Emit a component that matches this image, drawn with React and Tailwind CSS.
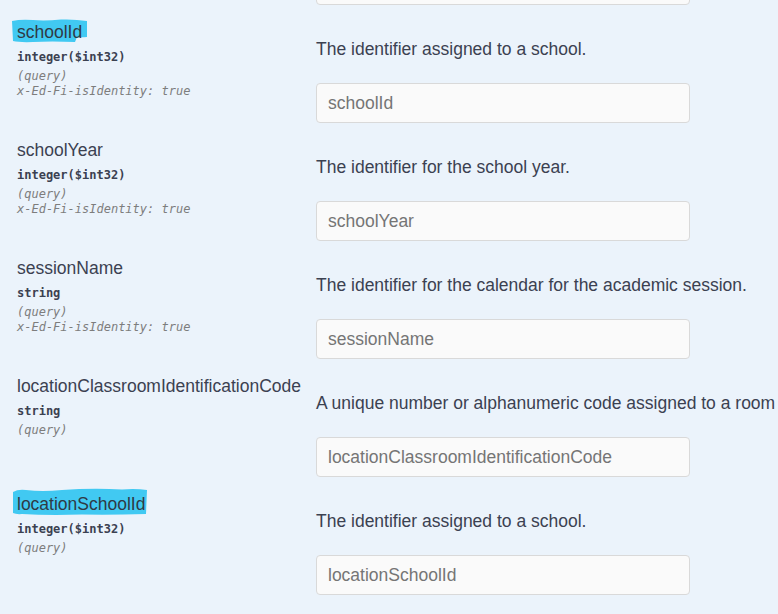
const PARAMS = [
  {
    name: "schoolId",
    type: "integer($int32)",
    identity: true,
    description: "The identifier assigned to a school.",
    highlight: "first",
  },
  {
    name: "schoolYear",
    type: "integer($int32)",
    identity: true,
    description: "The identifier for the school year.",
  },
  {
    name: "sessionName",
    type: "string",
    identity: true,
    description: "The identifier for the calendar for the academic session.",
  },
  {
    name: "locationClassroomIdentificationCode",
    type: "string",
    identity: false,
    description: "A unique number or alphanumeric code assigned to a room by a school, school system, state, or other agency or entity.",
  },
  {
    name: "locationSchoolId",
    type: "integer($int32)",
    identity: false,
    description: "The identifier assigned to a school.",
    highlight: "last",
  },
]

export default function App() {
  return (
    <div className="h-[614px] w-[778px] overflow-hidden bg-[#ebf3fb] font-['Liberation_Sans',Arial,sans-serif] text-[#3b4151]">
      {/* tail of the previous parameter row */}
      <div className="h-[19px] overflow-hidden pl-[316px]">
        <div className="mt-[-35px] h-[40px] w-[374px] rounded-[4px] border border-[#d9d9d9] bg-[#fafafa]" />
      </div>

      {PARAMS.map((p) => (
        <ParamRow key={p.name} param={p} />
      ))}
    </div>
  )
}

// marker-pen highlight drawn over the screenshot
function Marker({ variant }) {
  if (variant === "first") {
    return (
      <svg
        className="absolute -top-[3px] -left-[6px] h-[25px] w-[78px]"
        viewBox="0 0 78 25"
        preserveAspectRatio="none"
      >
        <path
          d="M1 3 Q10 1 22 2 T50 1.5 Q64 1 76 3 L76 19 Q70 19.5 66 19 L64 24 Q40 23 22 24 Q8 24.5 2 23 Z"
          fill="#41c9f2"
        />
      </svg>
    )
  }
  return (
    <svg
      className="absolute -top-[6px] -left-[5px] h-[29px] w-[136px]"
      viewBox="0 0 136 29"
      preserveAspectRatio="none"
    >
      <path
        d="M1 5 Q6 2 14 3 Q30 5 50 3 Q80 1 110 2.5 Q124 1.5 135 3 L134 27 Q100 28 70 27.5 Q36 28.5 10 27 Q4 27.5 1 26 Z"
        fill="#41c9f2"
      />
    </svg>
  )
}

function ParamRow({ param }) {
  return (
    <div className="flex h-[118px]">
      {/* ── Name column ── */}
      <div className="w-[316px] shrink-0 pl-[17px] pt-[2px]">
        <div className="h-[22px] whitespace-nowrap text-[17.5px] leading-[22px]">
          {param.highlight ? (
            <span className="relative inline-block">
              <Marker variant={param.highlight} />
              <span className="relative text-[#2f3a45]">{param.name}</span>
            </span>
          ) : (
            param.name
          )}
        </div>
        <div className="mt-[6px] font-['DejaVu_Sans_Mono',monospace] text-[12px] font-bold leading-[16px] text-[#3b4151]">
          {param.type}
        </div>
        <div className="mt-[4px] font-['DejaVu_Sans_Mono',monospace] text-[12px] italic leading-[15px] text-[#7d7d7d]">
          (query)
        </div>
        {param.identity ? (
          <div className="font-['DejaVu_Sans_Mono',monospace] text-[12px] italic leading-[15px] text-[#7d7d7d]">
            x-Ed-Fi-isIdentity: true
          </div>
        ) : null}
      </div>

      {/* ── Description column ── */}
      <div className="pt-[18px]">
        <p className="whitespace-nowrap text-[17.5px] leading-[24px]">
          {param.description}
        </p>
        <input
          type="text"
          placeholder={param.name}
          className="mt-[22px] h-[40px] w-[374px] rounded-[4px] border border-[#d9d9d9] bg-[#fafafa] pl-[11px] text-[17.5px] outline-none placeholder:text-[#757575]"
        />
      </div>
    </div>
  )
}
